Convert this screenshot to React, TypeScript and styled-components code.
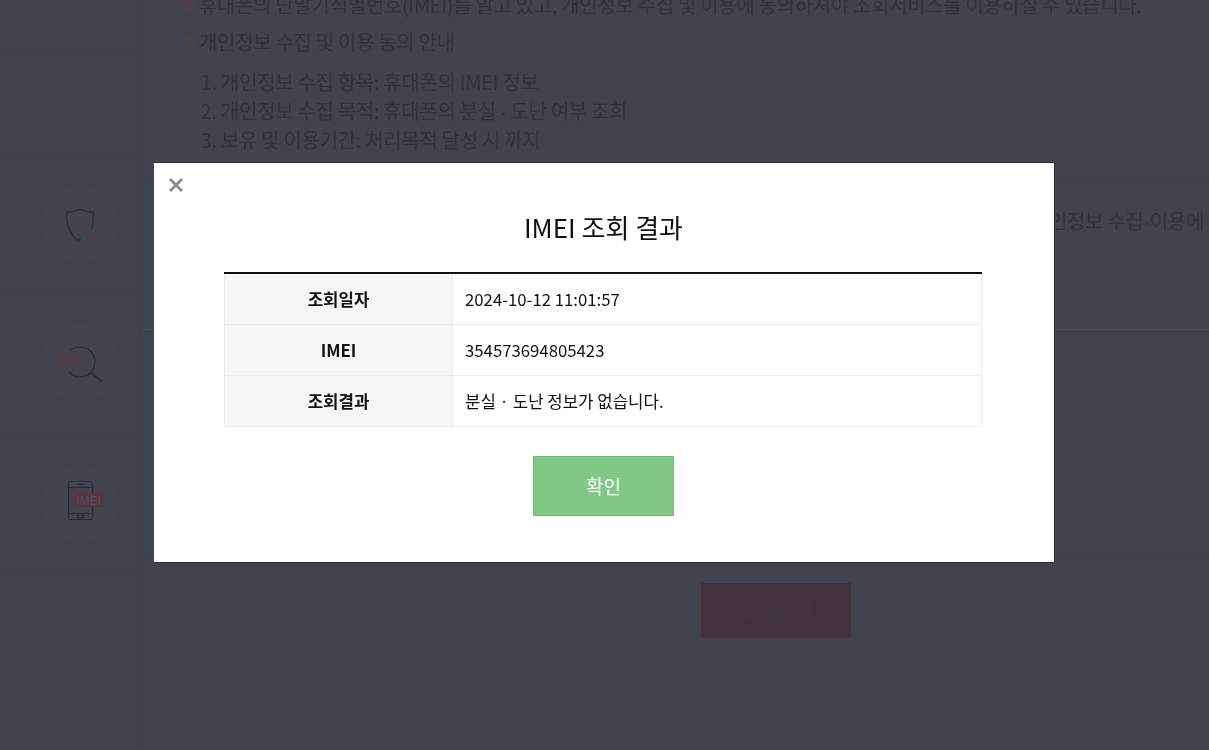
import * as React from 'react';
import styled, { createGlobalStyle } from 'styled-components';

const GlobalStyle = createGlobalStyle`
    html, body {
        margin: 0;
        height: 100%;
        background: #40434d;
        font-family: "Noto Sans CJK KR", "Noto Sans", sans-serif;
    }
    #root {
        height: 100%;
    }
`;

const Page = styled.div`
    display: flex;
    height: 750px;
    overflow: hidden;
    background: #40434d;
    color: #30333c;
    filter: blur(0.4px);
`;

const Sidebar = styled.nav`
    flex: 0 0 140px;
    box-sizing: border-box;
    padding-top: 52px;
    border-right: 1px solid #3e414b;
`;

const SideTop = styled.div`
    height: 104px;
    border-top: 1px solid #3e414b;
    border-bottom: 1px solid #3e414b;
`;

const SideItem = styled.div<{ $top: number; $height: number }>`
    box-sizing: border-box;
    height: ${p => p.$height}px;
    padding: ${p => p.$top}px 0 0 40px;
    border-bottom: 1px solid #3e414b;
`;

const IconCircle = styled.div`
    width: 80px;
    height: 80px;
    border-radius: 50%;
    background: #41444e;
    box-shadow: 0 0 0 1px #3f424c;
`;

const Main = styled.main`
    flex: 1;
    min-width: 0;
    margin-left: 1px;
    border-left: 1px solid #3e414b;
`;

const Notice = styled.ul`
    margin: -11px 0 0;
    padding: 0 0 0 42px;
    list-style: none;
`;

const NoticeItem = styled.li`
    display: flex;
    align-items: center;
    gap: 5px;
    height: 31px;
    margin-bottom: 6px;
    font-size: 20px;
    letter-spacing: -0.33px;
    white-space: nowrap;
`;

const Bullet = styled.span`
    flex: none;
    box-sizing: border-box;
    width: 10px;
    height: 10px;
    border: 2.5px solid #5f3a43;
    border-radius: 50%;
`;

const Terms = styled.ol`
    margin: 10px 0 0;
    padding: 0 0 0 79px;
    font-size: 20px;
    line-height: 29px;
    letter-spacing: -0.33px;
    white-space: nowrap;
`;

const AgreeBox = styled.section`
    box-sizing: border-box;
    display: flex;
    justify-content: flex-end;
    height: 149px;
    margin-top: 27px;
    padding: 24px 5px 0 0;
    border-top: 1px solid #3e414b;
    border-bottom: 1px solid #4a4c56;
    font-size: 20px;
    line-height: 29px;
    letter-spacing: -0.33px;
    white-space: nowrap;
`;

const NarrowDot = styled.span`
    font-family: "Liberation Sans", sans-serif;
    line-height: 0;
`;

const FormArea = styled.section`
    box-sizing: border-box;
    height: 226px;
    padding-top: 15px;
    border-bottom: 1px solid #3e414b;
`;

const ImeiField = styled.div`
    height: 40px;
    margin-left: 100px;
    border-top: 1px solid #5f373f;
    border-bottom: 1px solid #5f373f;
`;

const SubmitRow = styled.div`
    padding: 27px 0 0 559px;
`;

const SubmitButton = styled.div`
    display: flex;
    align-items: center;
    justify-content: center;
    width: 150px;
    height: 55px;
    background: #43323b;
    color: #393a43;
    font-size: 20px;
    letter-spacing: -0.5px;
`;

const Overlay = styled.div`
    position: fixed;
    inset: 0;
    display: flex;
    justify-content: center;
    align-items: flex-start;
    padding: 163px 1px 0 0;
`;

const Modal = styled.div`
    position: relative;
    box-sizing: border-box;
    width: 900px;
    height: 399px;
    padding: 0 71px 0 70px;
    background: #fff;
    box-shadow: 1px 0 0 #2f323c, 0 1px 0 #2f323c, 0 -1px 0 #2f323c;
`;

const CloseButton = styled.button`
    position: absolute;
    top: 14px;
    left: 14px;
    display: flex;
    padding: 0;
    border: 0;
    background: none;
    color: #888a8c;
`;

const Title = styled.h2`
    margin: 0;
    padding-top: 45px;
    height: 109px;
    box-sizing: border-box;
    color: #111;
    font-size: 26px;
    font-weight: 400;
    line-height: 38px;
    text-align: center;
`;

const ResultTable = styled.table`
    width: 758px;
    border-collapse: collapse;
    border-top: 2px solid #111;
    table-layout: fixed;
    font-size: 16.75px;
    color: #111;
`;

const HeadCell = styled.th`
    box-sizing: border-box;
    width: 228px;
    height: 51px;
    padding: 0;
    border: 1px solid #ececec;
    background: #f6f6f6;
    font-weight: 700;
    text-align: center;
`;

const ValueCell = styled.td`
    box-sizing: border-box;
    height: 51px;
    padding: 0 12px;
    border: 1px solid #ececec;
`;

const ButtonRow = styled.div`
    display: flex;
    justify-content: center;
    margin-top: 29px;
`;

const ConfirmButton = styled.button`
    box-sizing: border-box;
    width: 141px;
    height: 60px;
    border: 1px solid #6fc074;
    background: #80c883;
    color: #fff;
    font-family: inherit;
    font-size: 19px;
`;

const ShieldIcon = () => (
    <svg width="80" height="80" viewBox="0 0 80 80" fill="none" strokeWidth="1.3">
        <path
            d="M51.5 45C53 41 53.5 36 53.5 28C48.5 28 43.5 27 40 25C36.5 27 31.5 28 26.5 28C26.5 42 30 51 38 56.5L40.5 54"
            stroke="#2b2e38"
        />
        <path d="M34.5 39L38.5 43.5L46.5 34.5" stroke="#5c3840" strokeWidth="1.6" />
        <path d="M44 46L59 54L52.5 55.5L50 62Z" stroke="#5c3840" />
    </svg>
);

const SearchIcon = () => (
    <svg width="80" height="80" viewBox="0 0 80 80" fill="none">
        <path d="M31 27A15 15 0 1 1 29 49" stroke="#2b2e38" strokeWidth="1.3" />
        <path d="M51 50L62 58.5" stroke="#2b2e38" strokeWidth="1.6" />
        <text x="15" y="44" fill="#5c3840" fontFamily="Liberation Sans" fontSize="16.5" fontWeight="700">
            25%
        </text>
    </svg>
);

const PhoneIcon = () => (
    <svg width="80" height="80" viewBox="0 0 80 80" fill="none" stroke="#2b2e38" strokeWidth="1.2">
        <rect x="28.5" y="17.5" width="24" height="38" rx="2.5" />
        <path d="M28.5 23.5H52.5M28.5 49.5H52.5M37 20.5H44" />
        <rect x="37.5" y="51" width="6" height="3" rx="1" />
        <rect x="34" y="29" width="29" height="14" fill="#59343b" stroke="none" />
        <text
            x="48.5"
            y="40.5"
            fill="#4e4a54"
            stroke="none"
            fontFamily="Liberation Sans"
            fontSize="12"
            fontWeight="700"
            textAnchor="middle"
        >
            IMEI
        </text>
    </svg>
);

const rows = [
    { label: '조회일자', value: '2024-10-12 11:01:57' },
    { label: 'IMEI', value: '354573694805423' },
    { label: '조회결과', value: '분실 · 도난 정보가 없습니다.' }
];

const App = () => {
    return (
        <>
            <GlobalStyle />
            <Page aria-hidden="true">
                <Sidebar>
                    <SideTop />
                    <SideItem $top={26} $height={138}>
                        <IconCircle>
                            <ShieldIcon />
                        </IconCircle>
                    </SideItem>
                    <SideItem $top={27} $height={138}>
                        <IconCircle>
                            <SearchIcon />
                        </IconCircle>
                    </SideItem>
                    <SideItem $top={30} $height={136}>
                        <IconCircle>
                            <PhoneIcon />
                        </IconCircle>
                    </SideItem>
                </Sidebar>
                <Main>
                    <Notice>
                        <NoticeItem>
                            <Bullet />
                            휴대폰의 단말기식별번호(IMEI)를 알고 있고, 개인정보 수집 및 이용에 동의하셔야 조회서비스를 이용하실 수 있습니다.
                        </NoticeItem>
                        <NoticeItem>
                            <Bullet />
                            개인정보 수집 및 이용 동의 안내
                        </NoticeItem>
                    </Notice>
                    <Terms>
                        <li>개인정보 수집 항목: 휴대폰의 IMEI 정보</li>
                        <li>
                            개인정보 수집 목적: 휴대폰의 분실 <NarrowDot>·</NarrowDot> 도난 여부 조회
                        </li>
                        <li>보유 및 이용기간: 처리목적 달성 시 까지</li>
                    </Terms>
                    <AgreeBox>
                        <span>
                            휴대폰 분실 <NarrowDot>·</NarrowDot> 도난 여부 조회를 위한 개인정보 수집<NarrowDot>·</NarrowDot>이용에
                        </span>
                    </AgreeBox>
                    <FormArea>
                        <ImeiField />
                    </FormArea>
                    <SubmitRow>
                        <SubmitButton>조회하기</SubmitButton>
                    </SubmitRow>
                </Main>
            </Page>
            <Overlay>
                <Modal>
                    <CloseButton aria-label="닫기">
                        <svg width="16" height="16" viewBox="0 0 16 16" stroke="currentColor" strokeWidth="2.8">
                            <path d="M2 2L14 14M14 2L2 14" />
                        </svg>
                    </CloseButton>
                    <Title>IMEI 조회 결과</Title>
                    <ResultTable>
                        <tbody>
                            {rows.map(row => (
                                <tr key={row.label}>
                                    <HeadCell>{row.label}</HeadCell>
                                    <ValueCell>{row.value}</ValueCell>
                                </tr>
                            ))}
                        </tbody>
                    </ResultTable>
                    <ButtonRow>
                        <ConfirmButton>확인</ConfirmButton>
                    </ButtonRow>
                </Modal>
            </Overlay>
        </>
    );
};

export default App;
